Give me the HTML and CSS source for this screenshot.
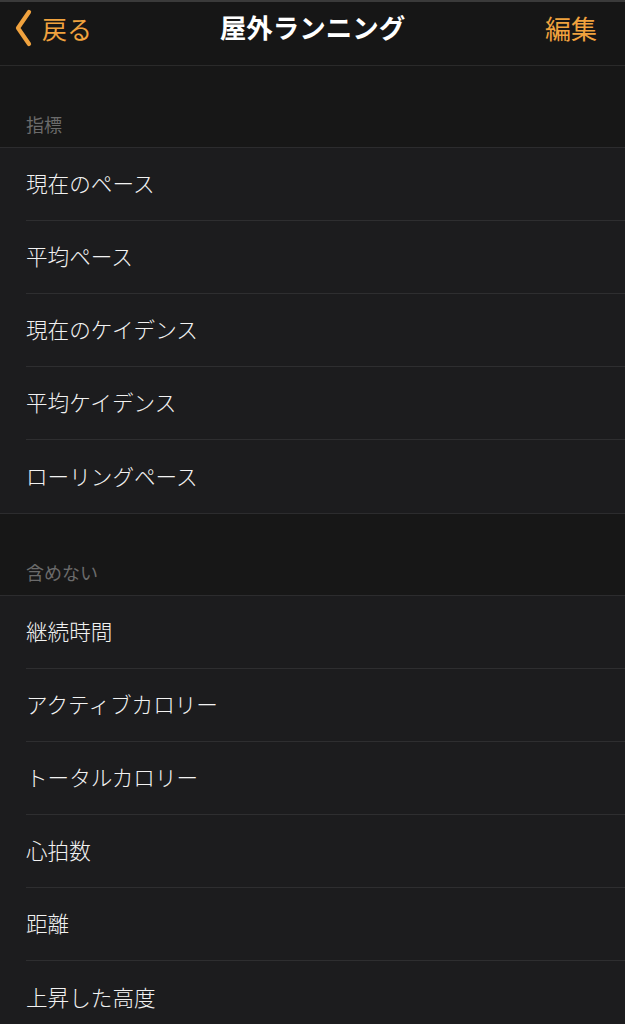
FILE: index.html
```html
<!DOCTYPE html>
<html lang="ja">
<head>
<meta charset="utf-8">
<link rel="stylesheet" href="styles.css">
</head>
<body>
<header class="nav">
  <div class="back">
    <svg class="chev" width="18" height="38" viewBox="0 0 18 38"><path d="M15 3 L4 19 L15 35" fill="none" stroke="#f0a23e" stroke-width="4.2" stroke-linecap="round" stroke-linejoin="round"/></svg>
    <span>戻る</span>
  </div>
  <div class="title">屋外ランニング</div>
  <div class="edit">編集</div>
</header>
<section class="group">
  <div class="ghead">指標</div>
  <ul class="list">
    <li>現在のペース</li>
    <li>平均ペース</li>
    <li>現在のケイデンス</li>
    <li>平均ケイデンス</li>
    <li>ローリングペース</li>
  </ul>
</section>
<section class="group">
  <div class="ghead">含めない</div>
  <ul class="list">
    <li>継続時間</li>
    <li>アクティブカロリー</li>
    <li>トータルカロリー</li>
    <li>心拍数</li>
    <li>距離</li>
    <li>上昇した高度</li>
  </ul>
</section>
</body>
</html>
```
FILE: styles.css
```css
* { box-sizing: border-box; }
html, body { margin: 0; padding: 0; }
body {
  background: #171717;
  font-family: "Noto Sans CJK JP", "Noto Sans", sans-serif;
  color: #f2f2f2;
  width: 625px;
  height: 1024px;
  overflow: hidden;
}
.nav {
  height: 66px;
  display: flex;
  align-items: center;
  justify-content: space-between;
  background: #161616;
  border-top: 2px solid #3a3a3a;
  border-bottom: 1px solid #2a2a2a;
  padding: 0 28px 12px 14px;
  position: relative;
}
.back {
  display: flex;
  align-items: center;
  gap: 10px;
  color: #f0a23e;
  font-size: 25px;
}
.chev { display: block; }
.title {
  position: absolute;
  left: 0; right: 0;
  top: 7px;
  text-align: center;
  font-size: 26.5px;
  line-height: 36px;
  font-weight: 700;
  color: #ffffff;
  pointer-events: none;
}
.edit {
  color: #f0a23e;
  font-size: 26px;
}
.ghead {
  height: 82px;
  display: flex;
  align-items: flex-end;
  padding: 0 0 10px 26px;
  font-size: 18px;
  color: #6b6b6b;
  border-bottom: 1px solid #2c2c2e;
}
.list {
  list-style: none;
  margin: 0;
  padding: 0 0 0 26px;
  background: #1c1c1e;
  border-bottom: 1px solid #2c2c2e;
}
.list li {
  height: 73px;
  display: flex;
  align-items: center;
  padding-bottom: 3px;
  font-size: 21.6px;
  font-weight: 300;
  color: #f2f2f2;
  border-bottom: 1px solid #2e2e30;
}
.list li:last-child { border-bottom: none; }
```
